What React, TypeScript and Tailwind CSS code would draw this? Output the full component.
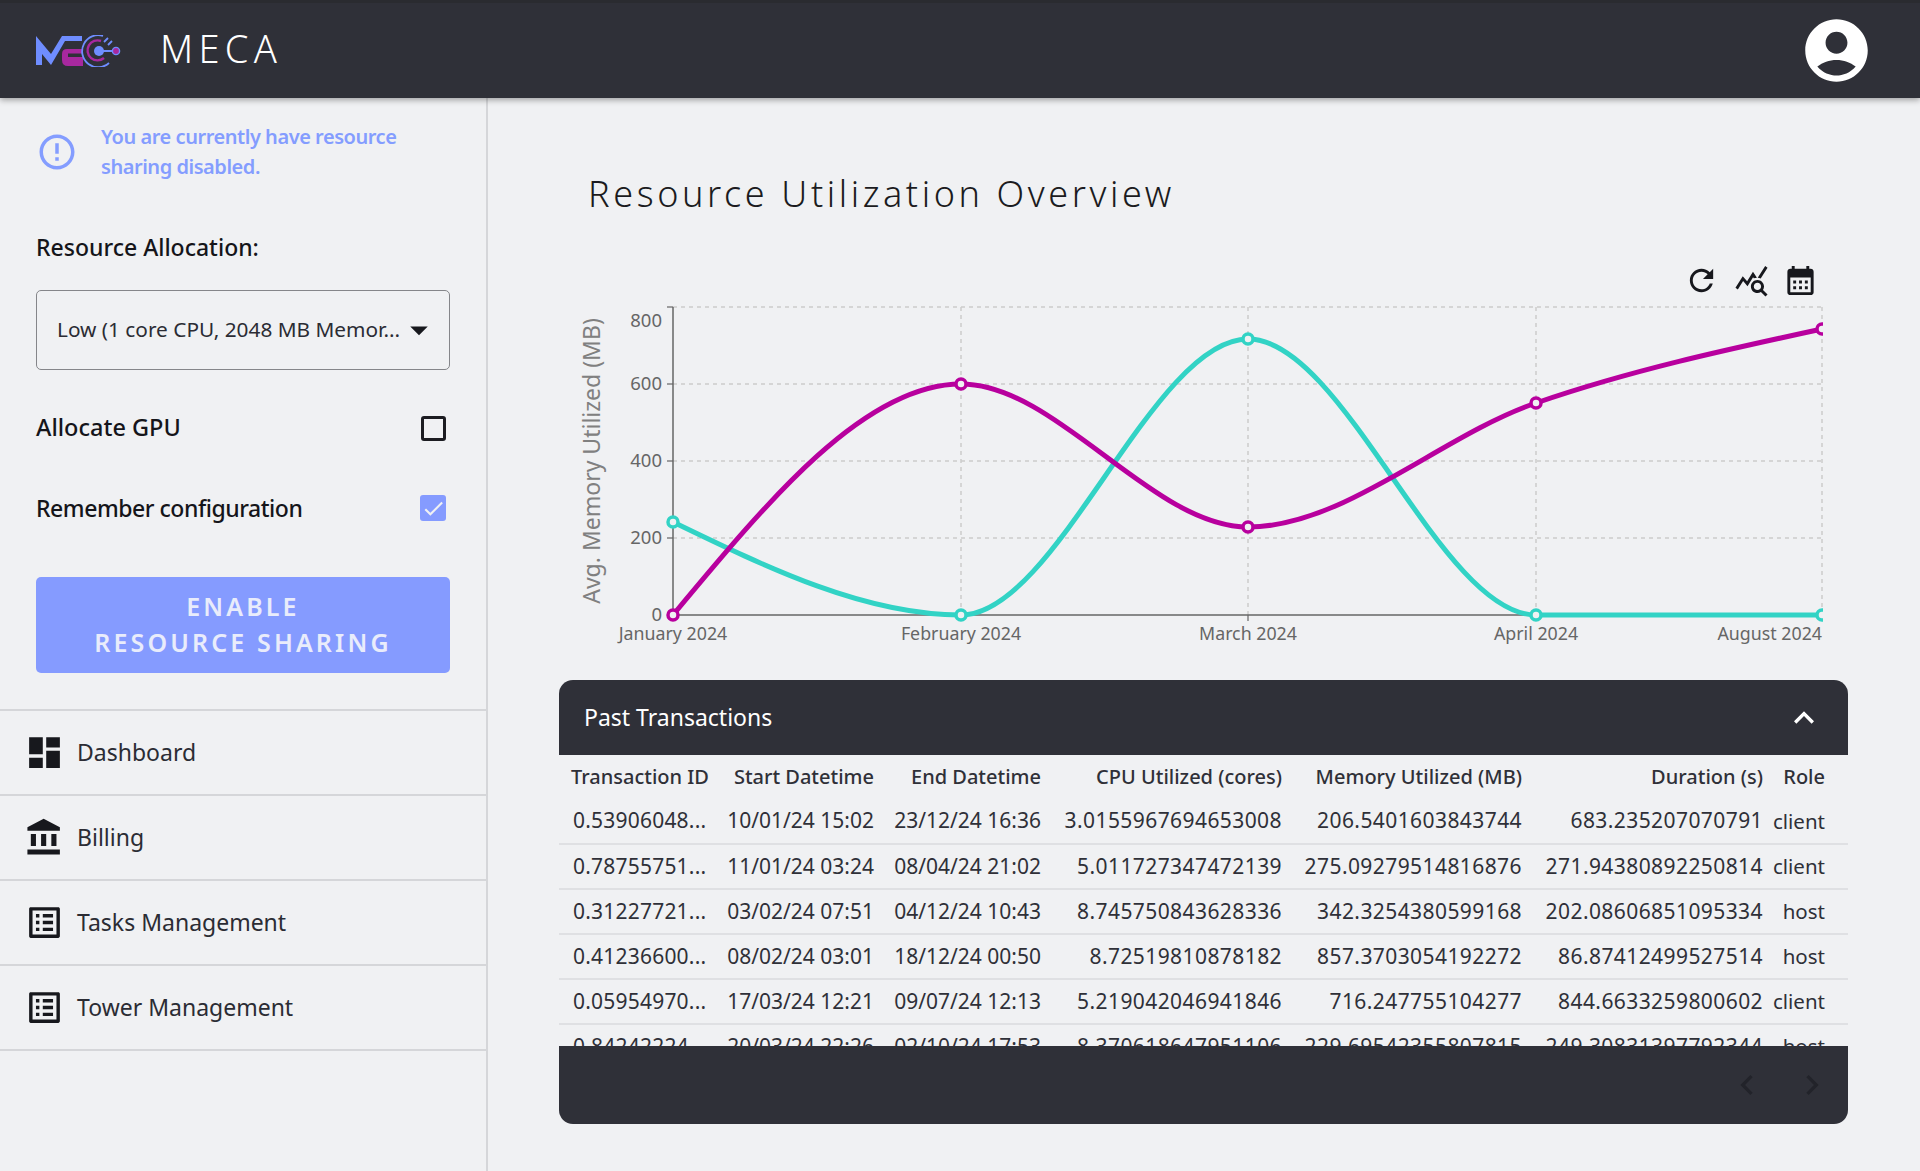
import React from "react";

const font = { fontFamily: '"Noto Sans", "Open Sans", sans-serif' };

function MuiIcon({ d, className }: { d: string; className: string }) {
  return (
    <svg viewBox="0 0 24 24" fill="currentColor" className={className}>
      <path d={d} />
    </svg>
  );
}

const icons = {
  error: "M11 15h2v2h-2zm0-8h2v6h-2zm.99-5C6.47 2 2 6.48 2 12s4.47 10 9.99 10C17.52 22 22 17.52 22 12S17.52 2 11.99 2zM12 20c-4.42 0-8-3.58-8-8s3.58-8 8-8 8 3.58 8 8-3.58 8-8 8z",
  account: "M12 2C6.48 2 2 6.48 2 12s4.48 10 10 10 10-4.48 10-10S17.52 2 12 2zm0 4c1.93 0 3.5 1.57 3.5 3.5S13.93 13 12 13s-3.5-1.57-3.5-3.5S10.07 6 12 6zm0 14c-2.03 0-4.43-.82-6.14-2.88C7.55 15.8 9.68 15 12 15s4.45.8 6.14 2.12C16.43 19.18 14.03 20 12 20z",
  dashboard: "M3 13h8V3H3v10zm0 8h8v-6H3v6zm10 0h8V11h-8v10zm0-18v6h8V3h-8z",
  bank: "M4 10v7h3v-7H4zm6 0v7h3v-7h-3zM2 22h19v-3H2v3zm14-12v7h3v-7h-3zm-4.5-9L2 6v2h19V6l-9.5-5z",
  list: "M19 5v14H5V5h14m1.1-2H3.9c-.5 0-.9.4-.9.9v16.2c0 .4.4.9.9.9h16.2c.4 0 .9-.5.9-.9V3.9c0-.5-.5-.9-.9-.9zM11 7h6v2h-6V7zm0 4h6v2h-6v-2zm0 4h6v2h-6zM7 7h2v2H7zm0 4h2v2H7zm0 4h2v2H7z",
  refresh: "M17.65 6.35C16.2 4.9 14.21 4 12 4c-4.42 0-7.99 3.58-7.99 8s3.57 8 7.99 8c3.73 0 6.84-2.55 7.73-6h-2.08c-.82 2.33-3.04 4-5.65 4-3.31 0-6-2.69-6-6s2.69-6 6-6c1.66 0 3.14.69 4.22 1.78L13 11h7V4l-2.35 2.35z",
  stats: "M19.88 18.47c.44-.7.7-1.51.7-2.39 0-2.49-2.01-4.5-4.5-4.5s-4.5 2.01-4.5 4.5 2.01 4.5 4.49 4.5c.88 0 1.7-.26 2.39-.7L21.58 23 23 21.58l-3.12-3.11zm-3.8.11c-1.38 0-2.5-1.12-2.5-2.5s1.12-2.5 2.5-2.5 2.5 1.12 2.5 2.5-1.12 2.5-2.5 2.5zm-.36-8.5c-.74.02-1.45.18-2.1.45l-.55-.83-3.8 6.18-3.01-3.52-3.63 5.81L1 17l5-8 3 3.5L13 6l2.72 4.08zm2.59.5c-.64-.28-1.33-.45-2.05-.49L21.38 2 23 3.18l-4.69 7.4z",
  calendar: "M19 4h-1V2h-2v2H8V2H6v2H5c-1.11 0-1.99.9-1.99 2L3 20c0 1.1.89 2 2 2h14c1.1 0 2-.9 2-2V6c0-1.1-.9-2-2-2zm0 16H5V10h14v10zM9 14H7v-2h2v2zm4 0h-2v-2h2v2zm4 0h-2v-2h2v2zm-8 4H7v-2h2v2zm4 0h-2v-2h2v2zm4 0h-2v-2h2v2z",
  expandLess: "m12 8-6 6 1.41 1.41L12 10.83l4.59 4.58L18 14z",
  left: "M15.41 7.41 14 6l-6 6 6 6 1.41-1.41L10.83 12z",
  right: "M10 6 8.59 7.41 13.17 12l-4.58 4.59L10 18l6-6z",
  drop: "m7 10 5 5 5-5z",
  check: "M9 16.17 4.83 12l-1.42 1.41L9 19 21 7l-1.41-1.41z",
};

function Logo() {
  return (
    <svg viewBox="16 14 86 32" className="w-[86px] h-[32px] shrink-0" fill="none">
      <path d="M16 15 L31 33 L42 15 H62 V20 H45 L31 44 L22 33 V44 H16 Z" fill="#6f8dff" />
      <path d="M42 33 Q42 28 47 28 H63 V32.5 H48 V36 H63 V45 H48 Q42 45 42 39 Z" fill="#a8289f" />
      <path d="M89 42 A16 16 0 1 1 83 15" stroke="#6f8dff" strokeWidth="1.8" />
      <path d="M84 37 A10 10 0 1 1 81 20" stroke="#a8289f" strokeWidth="2.4" />
      <path d="M84 21 L88 17 M88 24 L92 20" stroke="#6f8dff" strokeWidth="1.8" />
      <path d="M80 30 H92" stroke="#6f8dff" strokeWidth="2" />
      <circle cx="79" cy="30" r="5" fill="#6f8dff" />
      <circle cx="96" cy="30" r="3.6" fill="#a8289f" stroke="#6f8dff" strokeWidth="1.4" />
    </svg>
  );
}

type Pt = [number, number];

function monotonePath(pts: Pt[]) {
  const slopes: number[] = [];
  for (let i = 1; i < pts.length - 1; i++) {
    const h0 = pts[i][0] - pts[i - 1][0];
    const h1 = pts[i + 1][0] - pts[i][0];
    const s0 = (pts[i][1] - pts[i - 1][1]) / h0;
    const s1 = (pts[i + 1][1] - pts[i][1]) / h1;
    const p = (s0 * h1 + s1 * h0) / (h0 + h1);
    slopes[i] = (Math.sign(s0) + Math.sign(s1)) * Math.min(Math.abs(s0), Math.abs(s1), 0.5 * Math.abs(p)) || 0;
  }
  const n = pts.length - 1;
  slopes[0] = (3 * (pts[1][1] - pts[0][1]) / (pts[1][0] - pts[0][0]) - slopes[1]) / 2;
  slopes[n] = (3 * (pts[n][1] - pts[n - 1][1]) / (pts[n][0] - pts[n - 1][0]) - slopes[n - 1]) / 2;
  let d = `M${pts[0][0]},${pts[0][1]}`;
  for (let i = 1; i <= n; i++) {
    const dx = (pts[i][0] - pts[i - 1][0]) / 3;
    d += `C${pts[i - 1][0] + dx},${pts[i - 1][1] + dx * slopes[i - 1]} ${pts[i][0] - dx},${pts[i][1] - dx * slopes[i]} ${pts[i][0]},${pts[i][1]}`;
  }
  return d;
}

const xs = [673, 961, 1248, 1536, 1822];
const ys = [615, 538, 461, 384, 307];
const teal: Pt[] = [[673, 522], [961, 615], [1248, 339], [1536, 615], [1822, 615]];
const purple: Pt[] = [[673, 615], [961, 384], [1248, 527], [1536, 403], [1822, 329]];

function Chart() {
  const tick = { fill: "#666", fontSize: 17.8, fontFamily: font.fontFamily };
  return (
    <svg viewBox="560 298 1288 382" className="ml-[1px] w-[1288px] h-[382px] block">
      <defs>
        <clipPath id="plot">
          <rect x="660" y="298" width="1163" height="330" />
        </clipPath>
      </defs>
      {ys.slice(1).map((y) => (
        <line key={y} x1="673" x2="1822" y1={y} y2={y} stroke="#ccc" strokeWidth="1.5" strokeDasharray="4 4" />
      ))}
      {xs.slice(1).map((x) => (
        <line key={x} x1={x} x2={x} y1="307" y2="615" stroke="#ccc" strokeWidth="1.5" strokeDasharray="4 4" />
      ))}
      {ys.map((y) => (
        <line key={y} x1="667" x2="673" y1={y} y2={y} stroke="#666" strokeWidth="1.2" />
      ))}
      {xs.map((x) => (
        <line key={x} x1={x} x2={x} y1="615" y2="621" stroke="#666" strokeWidth="1.2" />
      ))}
      <line x1="673" x2="673" y1="307" y2="615" stroke="#666" strokeWidth="1.5" />
      <line x1="673" x2="1822" y1="615" y2="615" stroke="#666" strokeWidth="1.5" />
      {[["800", 327], ["600", 390], ["400", 467], ["200", 544], ["0", 621]].map(([t, y]) => (
        <text key={t} x="662" y={y} textAnchor="end" {...tick} fontSize="18.5">{t}</text>
      ))}
      <text x="673" y="640" textAnchor="middle" {...tick}>January 2024</text>
      <text x="961" y="640" textAnchor="middle" {...tick}>February 2024</text>
      <text x="1248" y="640" textAnchor="middle" {...tick}>March 2024</text>
      <text x="1536" y="640" textAnchor="middle" {...tick}>April 2024</text>
      <text x="1822" y="640" textAnchor="end" {...tick}>August 2024</text>
      <text transform="translate(600 461) rotate(-90)" textAnchor="middle" fill="#808080" fontSize="23" fontFamily={font.fontFamily}>Avg. Memory Utilized (MB)</text>
      <g clipPath="url(#plot)" fill="none" strokeWidth="5">
        <path d={monotonePath(teal)} stroke="#32d3c5" />
        <path d={monotonePath(purple)} stroke="#b8009e" />
        {teal.map(([x, y]) => (
          <circle key={x} cx={x} cy={y} r="5" stroke="#32d3c5" strokeWidth="3.5" fill="#f0f1f3" />
        ))}
        {purple.map(([x, y]) => (
          <circle key={x} cx={x} cy={y} r="5" stroke="#b8009e" strokeWidth="3.5" fill="#f0f1f3" />
        ))}
      </g>
    </svg>
  );
}

const rows = [
  ["0.53906048...", "10/01/24 15:02", "23/12/24 16:36", "3.0155967694653008", "206.5401603843744", "683.235207070791", "client"],
  ["0.78755751...", "11/01/24 03:24", "08/04/24 21:02", "5.011727347472139", "275.09279514816876", "271.94380892250814", "client"],
  ["0.31227721...", "03/02/24 07:51", "04/12/24 10:43", "8.745750843628336", "342.3254380599168", "202.08606851095334", "host"],
  ["0.41236600...", "08/02/24 03:01", "18/12/24 00:50", "8.72519810878182", "857.3703054192272", "86.87412499527514", "host"],
  ["0.05954970...", "17/03/24 12:21", "09/07/24 12:13", "5.219042046941846", "716.247755104277", "844.6633259800602", "client"],
  ["0.84242224...", "20/03/24 22:26", "02/10/24 17:53", "8.370618647951106", "229.69542355807815", "249.30831397792344", "host"],
];

const headers = ["Start Datetime", "End Datetime", "CPU Utilized (cores)", "Memory Utilized (MB)", "Duration (s)", "Role"];

function NavItem({ icon, label }: { icon: string; label: string }) {
  return (
    <div className="flex items-center h-[85px] border-b-2 border-[#d5d6d9] pl-[24px] gap-[12px] text-[23px] text-[#2b2c34]">
      <MuiIcon d={icon} className="w-[41px] h-[41px] text-[#17181d] shrink-0" />
      <span>{label}</span>
    </div>
  );
}

export default function App() {
  return (
    <div className="h-[1171px] overflow-hidden flex flex-col bg-[#f0f1f3]" style={font}>
      <header className="relative z-10 h-[98px] shrink-0 bg-[#2f3038] border-t-[3px] border-[#2a2b30] shadow-[0_2px_6px_rgba(0,0,0,0.35)] flex items-center pl-[36px] pr-[46px]">
        <Logo />
        <span className="ml-[38px] mb-[5px] text-[38px] font-light tracking-[0.14em] text-white">MECA</span>
        <MuiIcon d={icons.account} className="ml-auto w-[75px] h-[75px] text-white" />
      </header>

      <div className="flex flex-1 min-h-0">
        <aside className="w-[488px] shrink-0 border-r-2 border-[#d5d6d9] flex flex-col">
          <div className="flex items-center px-[36px] gap-[23px] h-[108px]">
            <MuiIcon d={icons.error} className="w-[42px] h-[42px] text-[#849dff] shrink-0" />
            <p className="text-[20px] leading-[30px] font-semibold tracking-[-0.023em] text-[#849dff] w-[320px]">You are currently have resource sharing disabled.</p>
          </div>
          <div className="px-[36px]">
            <div className="mt-[26px] text-[23px] leading-[30px] font-medium text-[#15151a]">Resource Allocation:</div>
            <div className="mt-[28px] h-[80px] border border-[#85868a] rounded-[5px] flex items-center pl-[20px] pr-[9px]">
              <span className="text-[20.8px] text-[#2b2c34] whitespace-nowrap overflow-hidden flex-1">Low (1 core CPU, 2048 MB Memor...</span>
              <MuiIcon d={icons.drop} className="w-[42px] h-[42px] -ml-[5px] text-[#17181d] shrink-0" />
            </div>
            <div className="mt-[43px] h-[30px] flex items-center justify-between pr-[4px]">
              <span className="text-[23.5px] font-medium text-[#15151a]">Allocate GPU</span>
              <span className="w-[25px] h-[25px] border-[3px] border-[#1c1c21] rounded-[3px]" />
            </div>
            <div className="mt-[50px] h-[30px] flex items-center justify-between pr-[4px]">
              <span className="text-[23px] font-medium tracking-[-0.02em] text-[#15151a]">Remember configuration</span>
              <span className="w-[26px] h-[26px] bg-[#859bff] rounded-[3px] flex items-center justify-center">
                <MuiIcon d={icons.check} className="w-[25px] h-[25px] text-[#f0f1f3]" />
              </span>
            </div>
            <div className="mt-[54px] h-[96px] pb-[2px] bg-[#859bff] rounded-[5px] flex items-center justify-center text-center text-[25px] leading-[36px] font-semibold tracking-[0.125em] text-[#e9ecfb]">
              ENABLE<br />RESOURCE SHARING
            </div>
          </div>
          <div className="mt-[36px] border-t-2 border-[#d5d6d9]">
            <NavItem icon={icons.dashboard} label="Dashboard" />
            <NavItem icon={icons.bank} label="Billing" />
            <NavItem icon={icons.list} label="Tasks Management" />
            <NavItem icon={icons.list} label="Tower Management" />
          </div>
        </aside>

        <main className="flex-1 min-w-0 pl-[71px] pr-[72px] pt-[71px]">
          <h1 className="ml-[29px] h-[50px] leading-[50px] text-[36px] font-light tracking-[0.1em] text-[#1b1b20] whitespace-nowrap">Resource Utilization Overview</h1>
          <div className="mt-[44px] h-[35px] flex justify-end gap-[14.5px] pr-[30px] text-[#17181d]">
            <MuiIcon d={icons.refresh} className="w-[35px] h-[35px]" />
            <MuiIcon d={icons.stats} className="w-[35px] h-[35px]" />
            <MuiIcon d={icons.calendar} className="w-[35px] h-[35px]" />
          </div>
          <Chart />
          <section className="rounded-[14px] overflow-hidden">
            <div className="h-[75px] bg-[#2f3038] flex items-center justify-between pl-[25px] pr-[24px] text-white">
              <span className="text-[23px] mb-[1px]">Past Transactions</span>
              <MuiIcon d={icons.expandLess} className="w-[40px] h-[40px]" />
            </div>
            <div className="h-[291px] overflow-hidden">
              <table className="w-full table-fixed border-collapse text-[#2f3038]">
                <colgroup>
                  <col className="w-[147px]" />
                  <col className="w-[168px]" />
                  <col className="w-[167px]" />
                  <col className="w-[241px]" />
                  <col className="w-[240px]" />
                  <col className="w-[241px]" />
                  <col className="w-[85px]" />
                </colgroup>
                <thead>
                  <tr className="h-[44px] text-[20px]">
                    <th className="text-left pl-[12px] font-medium whitespace-nowrap">Transaction ID</th>
                    {headers.map((h, i) => (
                      <th key={h} className={i === 5 ? "text-right font-medium pr-[23px] whitespace-nowrap" : "text-right font-medium whitespace-nowrap"}>{h}</th>
                    ))}
                  </tr>
                </thead>
                <tbody>
                  {rows.map((r) => (
                    <tr key={r[0]} className="h-[45px] border-b-2 border-[#dfe0e3]">
                      <td className="pl-[14px] whitespace-nowrap text-[21px] tracking-[0.01em]">{r[0]}</td>
                      <td className="text-right whitespace-nowrap text-[21px]">{r[1]}</td>
                      <td className="text-right whitespace-nowrap text-[21px]">{r[2]}</td>
                      <td className="text-right whitespace-nowrap text-[21px] tracking-[0.02em]">{r[3]}</td>
                      <td className="text-right whitespace-nowrap text-[21px] tracking-[0.02em]">{r[4]}</td>
                      <td className="text-right whitespace-nowrap text-[21px] tracking-[0.02em]">{r[5]}</td>
                      <td className="text-right whitespace-nowrap text-[20.5px] pr-[23px]">{r[6]}</td>
                    </tr>
                  ))}
                </tbody>
              </table>
            </div>
            <div className="h-[78px] bg-[#2f3038] flex items-center justify-end gap-[25px] pr-[16px] text-[#22232a]">
              <MuiIcon d={icons.left} className="w-[40px] h-[40px]" />
              <MuiIcon d={icons.right} className="w-[40px] h-[40px]" />
            </div>
          </section>
        </main>
      </div>
    </div>
  );
}
